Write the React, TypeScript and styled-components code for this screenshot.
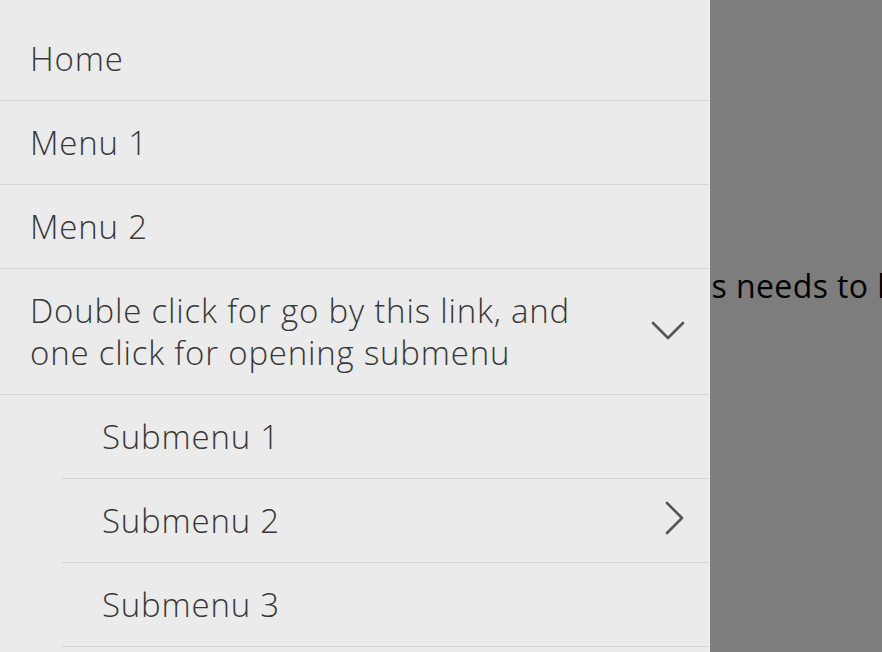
import React from "react";
import styled, { createGlobalStyle } from "styled-components";

const GlobalStyle = createGlobalStyle`
    html, body {
        margin: 0;
        padding: 0;
        background: #ffffff;
        overflow: hidden;
    }
    body {
        width: 882px;
        height: 652px;
    }
`;

type Sub = { label: string; hasChildren?: boolean };

const submenu: Sub[] = [
    { label: "Submenu 1" },
    { label: "Submenu 2", hasChildren: true },
    { label: "Submenu 3" },
];

const ChevronDown = () => (
    <svg width="34" height="20" viewBox="0 0 34 20" fill="none">
        <path d="M2 2 L17 17 L32 2" stroke="#555" strokeWidth="2.6" strokeLinecap="round" strokeLinejoin="round" />
    </svg>
);

const ChevronRight = () => (
    <svg width="20" height="34" viewBox="0 0 20 34" fill="none">
        <path d="M2 2 L17 17 L2 32" stroke="#555" strokeWidth="2.6" strokeLinecap="round" strokeLinejoin="round" />
    </svg>
);

export default function App() {
    return (
        <>
            <GlobalStyle />
            <Page>
                <Content>This needs to be scrolled</Content>
            </Page>
            <Overlay />
            <Panel>
                <MenuList>
                    <Item first>
                        <Link>Home</Link>
                    </Item>
                    <Item>
                        <Link>Menu 1</Link>
                    </Item>
                    <Item>
                        <Link>Menu 2</Link>
                    </Item>
                    <Item>
                        <Link>
                            <span>
                                Double click for go by this link, and
                                <br />
                                one click for opening submenu
                            </span>
                            <Toggle>
                                <ChevronDown />
                            </Toggle>
                        </Link>
                        <SubList>
                            {submenu.map((s) => (
                                <SubItem key={s.label}>
                                    <SubLink>
                                        <span>{s.label}</span>
                                        {s.hasChildren && (
                                            <SideToggle>
                                                <ChevronRight />
                                            </SideToggle>
                                        )}
                                    </SubLink>
                                </SubItem>
                            ))}
                        </SubList>
                    </Item>
                </MenuList>
            </Panel>
        </>
    );
}

const Page = styled.main`
    height: 652px;
    padding-top: 266px;
    box-sizing: border-box;
    padding-left: 665px;
`;

const Content = styled.p`
    margin: 0;
    white-space: nowrap;
    font-family: "Open Sans", sans-serif;
    font-size: 32px;
    letter-spacing: 0.4px;
    line-height: 40px;
    color: #000;
`;

const Overlay = styled.div`
    position: fixed;
    inset: 0;
    background: rgba(0, 0, 0, 0.51);
`;

const Panel = styled.nav`
    position: fixed;
    top: 0;
    left: 0;
    bottom: 0;
    width: 709px;
    background: #ebebeb;
    border-right: 1px solid #f2f2f2;
    overflow: hidden;
`;

const MenuList = styled.ul`
    list-style: none;
    margin: 0;
    padding: 0;
    font-family: "Open Sans", "Noto Sans", sans-serif;
    font-weight: 300;
    font-size: 33px;
    letter-spacing: 0.8px;
    color: #383838;
`;

const Item = styled.li<{ first?: boolean }>`
    padding-top: ${(p) => (p.first ? "17px" : "0")};
    & + & {
        border-top: 1px solid #d5d5d5;
    }
`;

const Link = styled.a`
    display: flex;
    align-items: center;
    justify-content: space-between;
    padding: 21px 24px 20px 30px;
    line-height: 42px;
    border-bottom: 1px solid #d5d5d5;
    margin-bottom: -1px;
`;

const Toggle = styled.span`
    display: flex;
    width: 34px;
    height: 20px;
    margin-top: -2px;
`;

const SubList = styled.ul`
    list-style: none;
    margin: 0 0 0 62px;
    padding: 0;
    border-top: 1px solid #d5d5d5;
`;

const SubItem = styled.li`
    border-bottom: 1px solid #d5d5d5;
`;

const SubLink = styled.a`
    display: flex;
    align-items: center;
    justify-content: space-between;
    padding: 21px 24px 20px 40px;
    line-height: 42px;
`;

const SideToggle = styled.span`
    display: flex;
    width: 20px;
    height: 34px;
    margin-top: -6px;
`;
